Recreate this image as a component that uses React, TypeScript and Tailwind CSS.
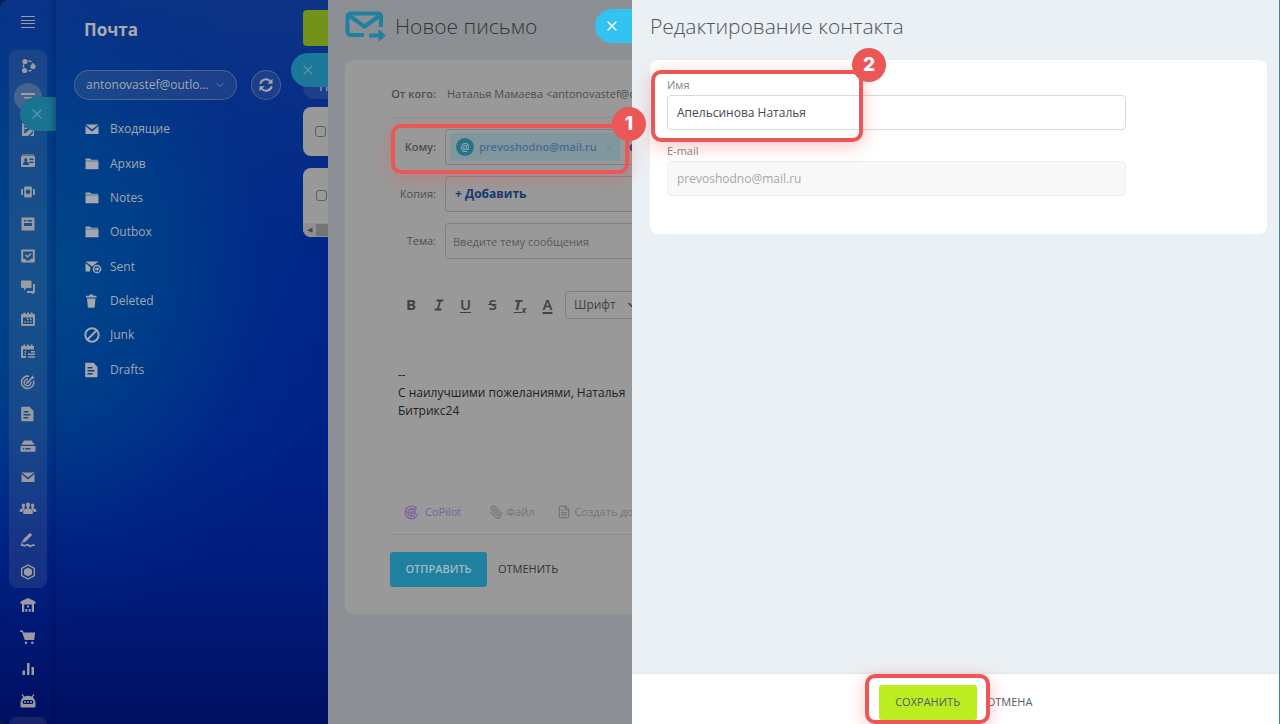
import React from "react";
import { X, ChevronDown, Paperclip, FileText, Ban } from "lucide-react";

type IconProps = { className?: string };

function Glyph({ children, className = "size-4" }: { children: React.ReactNode; className?: string }) {
  return (
    <svg viewBox="0 0 16 16" className={className} fill="currentColor" fillRule="evenodd" aria-hidden="true">
      {children}
    </svg>
  );
}

const stroke = { fill: "none", stroke: "currentColor" };

const Network = () => (
  <Glyph>
    <circle cx="8.5" cy="8" r="5" {...stroke} strokeWidth="1.6" strokeDasharray="3 1.6" />
    <circle cx="5" cy="3.5" r="2.6" />
    <circle cx="13" cy="8.5" r="2.6" />
    <circle cx="4.5" cy="12.5" r="2.6" />
  </Glyph>
);
const Filter = () => (
  <Glyph>
    <path d="M1 4h14v2H1zM4 8h8v1.6H4zM6 12h4v1.6H6z" />
  </Glyph>
);
const DocEdit = () => (
  <Glyph>
    <path d="M2 2h9v3h-1.500L4 11v1h1.500L14 4v11h-4l3-3v-2l-5 5H2zM4 5h4v1.500H4zM4 8h2v1.500H4z" />
  </Glyph>
);
const ContactCard = () => (
  <Glyph>
    <path d="M2 1.500h12v1H2zM2 3h12a1 1 0 0 1 1 1v9a1 1 0 0 1-1 1H2a1 1 0 0 1-1-1V4a1 1 0 0 1 1-1zM5.500 5A1.700 2 0 0 0 5 8.600L3 10v2h6v-2L6.500 8.600A1.700 2 0 0 0 5.500 5zM9.500 5.500V7h4V5.500zM9.500 8.500V10h4V8.500z" />
  </Glyph>
);
const Carousel = () => (
  <Glyph>
    <path d="M5 2.500h6a.8.8 0 0 1 .8.8v9.400a.8.8 0 0 1-.8.8H5a.8.8 0 0 1-.8-.8V3.300a.8.8 0 0 1 .8-.8zM8 5.500a2.300 2.300 0 1 0 0 4.600 2.300 2.300 0 0 0 0-4.600zM1 5h1.800v6H1zM13.200 5H15v6h-1.800z" />
  </Glyph>
);
const Feed = () => (
  <Glyph>
    <path d="M2 1.500h12a.5.5 0 0 1 .5.5v12a.5.5 0 0 1-.5.5H2a.5.5 0 0 1-.5-.5V2a.5.5 0 0 1 .5-.5zM4 4v1.500h2V4zM7.500 4v1.500H12V4zM4 7v3h8V7z" />
  </Glyph>
);
const TaskBox = () => (
  <Glyph>
    <path d="M2 1.500h12a.8.8 0 0 1 .8.8v11.400a.8.8 0 0 1-.8.8H2a.8.8 0 0 1-.8-.8V2.300a.8.8 0 0 1 .8-.8zM3.200 3.500v7.200h2l1.300 1.800h3l1.300-1.800h2V3.500z" />
    <path d="M5.500 7l2 2 3.500-3.500" {...stroke} strokeWidth="1.500" />
  </Glyph>
);
const Chats = () => (
  <Glyph>
    <path d="M2 1.500h8.500a1 1 0 0 1 1 1V8a1 1 0 0 1-1 1H6.500L4 11.500V9H2a1 1 0 0 1-1-1V2.500a1 1 0 0 1 1-1zM13 5h1a1 1 0 0 1 1 1v7a1 1 0 0 1-1 1h-.5v1.500L11 14H7v-2h6z" />
  </Glyph>
);
const Calendar = () => (
  <Glyph>
    <path d="M2 3h1.500V1.500h1.800V3h1.700V1.500h2V3h1.700V1.500h1.800V3H14a1 1 0 0 1 1 1v10a1 1 0 0 1-1 1H2a1 1 0 0 1-1-1V4a1 1 0 0 1 1-1zM3 6.500V13h10V6.500z" />
    <path d="M7 7.500h1.600V9H7zM10 7.500h1.600V9H10zM4.300 10.300h1.600v1.500H4.300zM7 10.300h1.600v1.500H7zM10 10.300h1.600v1.500H10z" />
  </Glyph>
);
const CalendarList = () => (
  <Glyph>
    <path d="M2 3h1.500V1.500h1.800V3h1.700V1.500h2V3h1.700V1.500h1.800V3H14v3.500H3V13h3v2H2a1 1 0 0 1-1-1V4a1 1 0 0 1 1-1zM4.500 8H6v1.500H4.500zM8 10.500h7V12H8zM8 13.200h7v1.600H8zM11 8h4v1.500h-4zM4.500 10.500H6V12H4.500z" />
  </Glyph>
);
const Target = () => (
  <Glyph>
    <path d="M13.600 6.500A6.200 6.200 0 1 1 9 2.300" {...stroke} strokeWidth="1.600" />
    <path d="M10.700 7.600A3.300 3.300 0 1 1 8 5.200" {...stroke} strokeWidth="1.500" />
    <path d="M7 9l5-5" {...stroke} strokeWidth="1.600" />
    <path d="M11 3.500L13 1v2h2l-2.500 2H11z" />
    <circle cx="7.300" cy="8.500" r="1.300" />
  </Glyph>
);
const Doc = () => (
  <Glyph>
    <path d="M2 .8h7.500L13.500 5v9.500a.8.8 0 0 1-.8.800H2a.8.8 0 0 1-.8-.8V1.600A.8.8 0 0 1 2 .8zM3.500 5v1.500h5V5zM3.500 8v1.500h7V8zM3.500 11v1.500h5V11z" />
  </Glyph>
);
const Drive = () => (
  <Glyph>
    <path d="M4 2.500h7.500l3 4.200h-13zM1 8h14a.5.5 0 0 1 .5.5V13a.8.8 0 0 1-.8.800H1.300a.8.8 0 0 1-.8-.8V8.500A.5.5 0 0 1 1 8zM2.800 10v1.600h1.500V10zM5.500 10v1.600h5V10z" />
  </Glyph>
);
const Mail = () => (
  <Glyph>
    <path d="M1.500 3.500h13L8 8.600zM1.500 5l6.500 5.500L14.500 5v7.500a.6.6 0 0 1-.6.600H2.100a.6.6 0 0 1-.6-.6z" />
  </Glyph>
);
const People = () => (
  <Glyph className="size-4 overflow-visible">
    <path d="M8 1.500c1.300 0 2 .9 2 2.300 0 1.200-.4 2-.9 2.600v1.100l3 1.500c.5.300.7.800.7 1.500v2.500H3.200v-2.500c0-.7.200-1.200.7-1.500l3-1.500V6.400C6.400 5.800 6 5 6 3.800c0-1.400.7-2.300 2-2.300zM3.500 2.500c1 0 1.500.7 1.500 1.800 0 1-.3 1.500-.6 2v1l1 .5-2 1.200C2.500 9.500 2.300 10.300 2.300 11H-.3V9.300c0-.5.200-.8.600-1l2.200-1v-1c-.4-.5-.7-1-.7-2 0-1.100.7-1.800 1.700-1.800zM12.500 2.500c-1 0-1.500.7-1.500 1.800 0 1 .3 1.500.6 2v1l-1 .5 2 1.200c.9.500 1.100 1.300 1.100 2h2.600V9.300c0-.5-.2-.8-.6-1l-2.200-1v-1c.4-.5.7-1 .7-2 0-1.100-.7-1.800-1.700-1.800z" />
  </Glyph>
);
const Sign = () => (
  <Glyph>
    <path d="M10 .8L12.200 3 5.500 9.800 2 11l1.200-3.400zM1 10l1.500 1.500L1 12z" />
    <path d="M1 13.500c2-2 2.500 1 4.500 0s2-1.500 3.500 0 2 .5 3 0 1.500 0 2.500-1" {...stroke} strokeWidth="1.800" />
  </Glyph>
);
const Hexagon = () => (
  <Glyph>
    <path d="M8 1l6.300 3.500v7L8 15l-6.300-3.500v-7z" {...stroke} strokeWidth="1.400" />
    <path d="M8 3.500l4 2.200v4.600l-4 2.200-4-2.200V5.700z" />
  </Glyph>
);
const Warehouse = () => (
  <Glyph>
    <path d="M8 1l7.500 3.500v2.300H14V15h-2.200V7.500H4.200V15H2V6.800H.5V4.500zM7 8.500h2v2H7zM5.300 12h2v2.800h-2zM8.700 12h2v2.800h-2z" />
  </Glyph>
);
const Cart = () => (
  <Glyph>
    <path d="M0 1.500h2.800l.8 2h11.600l-1 7.500H4.800L2 3H0zM6 12.500a1.300 1.300 0 1 1 0 2.600 1.300 1.300 0 0 1 0-2.600zM12.300 12.500a1.300 1.300 0 1 1 0 2.600 1.300 1.300 0 0 1 0-2.600z" />
  </Glyph>
);
const Bars = () => (
  <Glyph>
    <path d="M2.500 9.500h2.500V14H2.500zM7 2h2.500v12H7zM11.500 6H14v8h-2.500z" />
  </Glyph>
);
const Robot = () => (
  <Glyph>
    <path d="M2.500 1l2 2.500a8 8 0 0 1 7 0l2-2.500.8.700-1.500 2.500C14.500 5.800 15.500 8 15.500 10v3.500a1 1 0 0 1-1 1h-13a1 1 0 0 1-1-1V10c0-2 1-4.200 2.700-5.800L1.700 1.700zM4.500 7a2 2 0 0 0 0 4h7a2 2 0 0 0 0-4z" />
    <circle cx="5" cy="9" r="1.100" />
    <path d="M7 8.300h2v1.400H7z" />
    <circle cx="11" cy="9" r="1.100" />
  </Glyph>
);
const Folder = () => (
  <Glyph>
    <path d="M1.500 2.500H6l1.500 1.200H14v1H1.500zM1.500 5.300h13v7.900h-13z" />
  </Glyph>
);
const SentMail = () => (
  <Glyph className="size-4 overflow-visible">
    <path d="M1.500 2.500h13L8 7.500zM1.500 4l5 4.200-.5 4.300H1.500z" />
    <circle cx="13" cy="10" r="3.600" {...stroke} strokeWidth="1.500" />
    <path d="M10.700 9.200h2V7.800l2.700 2.200-2.700 2.200v-1.400h-2z" />
  </Glyph>
);
const Trash = () => (
  <Glyph>
    <path d="M5.500 1.500h3.500v1.200h3.500v1.800H2V2.700h3.500zM3 5.500h8.500l-.8 8.300a1 1 0 0 1-1 .9H4.800a1 1 0 0 1-1-.9z" />
  </Glyph>
);
const Junk = () => <Ban className="size-4 -scale-x-100" strokeWidth={3} />;

const Refresh = () => (
  <Glyph>
    <path d="M2.300 6.800A5.800 5.800 0 0 1 12.500 4.500M13.700 9.200A5.800 5.800 0 0 1 3.500 11.500" {...stroke} strokeWidth="2" />
    <path d="M14.500 1.800v5h-5zM1.500 14.200v-5h5z" />
  </Glyph>
);

const mainItems: [string, () => React.ReactElement][] = [
  ["Группы", Network],
  ["Фильтр", Filter],
  ["Документы", DocEdit],
  ["Контакты", ContactCard],
  ["Продажи", Carousel],
  ["Лента", Feed],
  ["Задачи", TaskBox],
  ["Чат", Chats],
  ["Календарь", Calendar],
  ["Расписание", CalendarList],
  ["Цели", Target],
  ["Файлы", Doc],
  ["Диск", Drive],
  ["Почта", Mail],
  ["Сотрудники", People],
  ["Подпись", Sign],
  ["Маркет", Hexagon],
];

const extraItems: [string, () => React.ReactElement][] = [
  ["Склад", Warehouse],
  ["Магазин", Cart],
  ["Аналитика", Bars],
  ["Автоматизация", Robot],
];

const folders: [string, () => React.ReactElement][] = [
  ["Входящие", Mail],
  ["Архив", Folder],
  ["Notes", Folder],
  ["Outbox", Folder],
  ["Sent", SentMail],
  ["Deleted", Trash],
  ["Junk", Junk],
  ["Drafts", Doc],
];

function CloseTab({ className }: IconProps) {
  return (
    <button
      aria-label="Закрыть"
      className={`absolute flex h-[34px] items-center rounded-l-full pl-[9px] ${className}`}
    >
      <X className="size-4" strokeWidth={2} />
    </button>
  );
}

function Badge({ n, className }: { n: number; className: string }) {
  return (
    <span
      className={`absolute flex size-[34px] items-center justify-center rounded-full bg-[#eb5757] font-['Inter',sans-serif] text-[19px] font-extrabold text-white ${className}`}
    >
      {n}
    </span>
  );
}

function Marker({ className, children }: { className: string; children?: React.ReactNode }) {
  return (
    <div
      className={`pointer-events-none absolute rounded-[10px] border-4 border-[#eb5757] shadow-[0_4px_18px_rgba(235,87,87,0.35)] ${className}`}
    >
      {children}
    </div>
  );
}

function Sidebar() {
  return (
    <nav className="relative flex w-14 shrink-0 flex-col items-center overflow-hidden text-[#999ba0]">
      <button aria-label="Меню" className="mt-4 flex h-3 w-[14px] flex-col justify-between">
        <span className="h-px w-full bg-[#9a9ca2]" />
        <span className="h-px w-full bg-[#9a9ca2]" />
        <span className="h-px w-full bg-[#9a9ca2]" />
        <span className="h-px w-full bg-[#9a9ca2]" />
      </button>
      <ul className="mt-[22px] flex h-[538px] w-[38px] shrink-0 flex-col rounded-lg bg-[#999]/15">
        {mainItems.map(([name, Icon]) => (
          <li key={name} className="flex flex-1 items-center justify-center">
            <button
              aria-label={name}
              className={
                name === "Фильтр"
                  ? "-my-2 flex size-7 shrink-0 items-center justify-center rounded-full bg-[#999]/35"
                  : "flex"
              }
            >
              <Icon />
            </button>
          </li>
        ))}
      </ul>
      <ul className="mt-px w-[38px] shrink-0">
        {extraItems.map(([name, Icon]) => (
          <li key={name} className="flex h-8 items-center justify-center">
            <button aria-label={name} className="flex">
              <Icon />
            </button>
          </li>
        ))}
      </ul>
      <div className="w-[38px] flex-1 rounded-t-lg bg-[#999]/15" />
      <CloseTab className="top-[97px] right-0 w-9 bg-[#197491] text-[#5793a8]" />
    </nav>
  );
}

function MailPanel() {
  return (
    <section className="relative flex w-[272px] shrink-0 overflow-hidden text-[#a4a7ad] shadow-[-2px_0_6px_rgba(0,10,60,0.35)]">
      <div className="w-[247px] shrink-0 pl-[18px]">
        <h2 className="mt-4 pl-[10px] text-[17px] leading-7 font-bold text-[#a9abb0]">Почта</h2>
        <div className="mt-[26px] flex gap-[14px]">
          <button className="flex h-[30px] w-[163px] items-center justify-between rounded-full border border-[#999]/40 bg-[#999]/15 pr-[10px] pl-[11px] text-[12px]">
            antonovastef@outlo...
            <ChevronDown className="size-3 shrink-0 opacity-60" />
          </button>
          <button
            aria-label="Обновить"
            className="flex size-[30px] items-center justify-center rounded-full border border-[#999]/40 bg-[#999]/15"
          >
            <Refresh />
          </button>
        </div>
        <ul className="mt-3 flex h-[275px] flex-col">
          {folders.map(([name, Icon]) => (
            <li key={name} className="flex flex-1 items-center">
              <a href="#" className="flex items-center gap-[10px] pl-[10px] text-[12px]">
                <Icon />
                {name}
              </a>
            </li>
          ))}
        </ul>
      </div>
      <div className="flex flex-1 flex-col pt-[10px]">
        <button aria-label="Написать" className="h-9 rounded-l bg-[#72921a]" />
        <div className="mt-[34px] h-[19px] overflow-hidden rounded-bl-xl bg-[#999]/15 pl-4 text-[13px] leading-3">П</div>
        <div className="mt-2 flex h-[49px] items-center rounded-l-lg bg-[#999] pl-3">
          <input
            type="checkbox"
            aria-label="Выбрать все"
            className="size-[11px] appearance-none rounded-[3px] border border-[#5c5f63]"
          />
        </div>
        <div className="mt-3 flex h-[69px] flex-col overflow-hidden rounded-l-lg bg-[#999]">
          <div className="flex flex-1 items-center pl-[13px]">
            <input
              type="checkbox"
              aria-label="Выбрать письмо"
              className="size-[11px] shrink-0 appearance-none rounded-[3px] border border-[#5c5f63]"
            />
          </div>
          <div className="flex h-[14px] items-center bg-[#8f8f8f] pl-1">
            <span className="text-[7px] text-[#4a4a4a]">◀</span>
            <span className="ml-1 h-3 flex-1 bg-[#747474]" />
          </div>
        </div>
      </div>
      <CloseTab className="top-[53px] right-0 w-[37px] bg-[#1b7898] text-[#5793a8]" />
    </section>
  );
}

function ComposeIcon() {
  return (
    <svg viewBox="0 0 42 32" className="h-8 w-[42px]" fill="none" stroke="#20809f" strokeWidth="4" aria-hidden="true">
      <path d="M19 24H6a3.500 3.500 0 0 1-3.500-3.500V6A3.500 3.500 0 0 1 6 2.500h27A3.500 3.500 0 0 1 36 6v10" />
      <path d="M4 4.500l15.500 11L35 4.500" />
      <path d="M24 24.500h11" strokeWidth="4" />
      <path d="M33.500 18v13l7.500-6.500z" fill="#20809f" stroke="none" />
    </svg>
  );
}

const labelClass = "w-[45px] shrink-0 text-right text-[11px] whitespace-nowrap";
const boxClass = "flex h-9 flex-1 items-center rounded-l border border-r-0 border-[#7d8084]";

function ComposePanel() {
  return (
    <section className="relative z-10 flex w-[304px] shrink-0 flex-col bg-[#8c9094] text-[#4a4e54]">
      <div className="flex flex-1 flex-col overflow-hidden">
        <header className="flex h-[60px] items-center gap-2 pb-[6px] pl-[17px]">
          <ComposeIcon />
          <h2 className="text-[21px] font-light whitespace-nowrap text-[#333437]">Новое письмо</h2>
        </header>
        <form
          className="ml-[17px] flex h-[554px] flex-col rounded-l-lg bg-[#999] pl-[46px]"
          onSubmit={(e) => e.preventDefault()}
        >
          <div className="mt-3 flex h-[46px] items-center gap-[11px] border-b border-[#8b8d90] text-[11px] whitespace-nowrap">
            <span className={`${labelClass} font-semibold`}>От кого:</span>
            <span>Наталья Мамаева &lt;antonovastef@outlook.com&gt;</span>
          </div>
          <div className="mt-[11px] flex items-center gap-[9px]">
            <span className={`${labelClass} font-semibold`}>Кому:</span>
            <div className={`${boxClass} gap-[9px] pl-1`}>
              <span className="flex h-7 w-[170px] shrink-0 items-center rounded-sm bg-[#80979d] pl-[6px] text-[11px] font-semibold text-[#4b6a94]">
                <span className="flex size-[18px] items-center justify-center rounded-full bg-[#2a7287] text-[10px] text-[#93afb7]">
                  @
                </span>
                <span className="ml-[5px] flex-1">prevoshodno@mail.ru</span>
                <X className="mr-[6px] size-[10px] text-[#718c95]" />
              </span>
              <a href="#" className="text-[12px] font-bold text-[#143a70]">еще</a>
            </div>
          </div>
          <div className="mt-[11px] flex items-center gap-[9px]">
            <span className={labelClass}>Копия:</span>
            <div className={`${boxClass} pl-[9px]`}>
              <button className="text-[12px] font-bold text-[#143a70]">+ Добавить</button>
            </div>
          </div>
          <div className="mt-[11px] flex items-center gap-[9px]">
            <label htmlFor="subject" className={labelClass}>
              Тема:
            </label>
            <input
              id="subject"
              placeholder="Введите тему сообщения"
              className={`${boxClass} min-w-0 pl-[7px] text-[11px] placeholder:text-[#56595e]`}
            />
          </div>
          <div className="mt-[25px] flex h-[42px] items-center border-b border-[#949698] text-[15px] font-bold whitespace-nowrap text-[#3f4349]">
            <button aria-label="Полужирный" className="ml-[7px] w-[27px] shrink-0 pl-2 text-left">B</button>
            <button aria-label="Курсив" className="flex w-[27px] shrink-0 justify-center">
              <svg viewBox="0 0 10 12" className="h-3 w-[10px]" fill="none" stroke="currentColor" strokeWidth="1.800" aria-hidden="true">
                <path d="M2.500 1.500h7M.5 10.500h7M6.200 1.500l-2.400 9" />
              </svg>
            </button>
            <button aria-label="Подчёркнутый" className="w-[27px] shrink-0 font-semibold underline underline-offset-2">U</button>
            <button aria-label="Зачёркнутый" className="w-[27px] shrink-0 font-semibold line-through">S</button>
            <button aria-label="Очистить формат" className="w-[28px] shrink-0 italic underline underline-offset-2">
              T<sub className="text-[9px]">x</sub>
            </button>
            <button aria-label="Цвет текста" className="w-[27px] shrink-0 font-semibold underline decoration-2 underline-offset-2">A</button>
            <button className="ml-1 flex h-7 w-24 shrink-0 items-center gap-[10px] rounded border border-[#7d8084] pl-2 text-[12px] font-normal">
              Шрифт
              <ChevronDown className="size-3" strokeWidth={3} />
            </button>
          </div>
          <div className="mt-10 h-[124px] pl-[7px] text-[12px] leading-[18px] whitespace-nowrap text-[#1f2023]">
            <p>--</p>
            <p>С наилучшими пожеланиями, Наталья</p>
            <p>Битрикс24</p>
          </div>
          <div className="flex h-[45px] items-center border-b border-[#8b8d90] pl-[13px] text-[11px] whitespace-nowrap text-[#72757a]">
            <button className="flex items-center gap-[6px] text-[#7d5fa3]">
              <svg viewBox="0 0 16 16" className="size-[15px]" fill="none" stroke="currentColor" strokeWidth="1.500" aria-hidden="true">
                <path d="M13.500 4A6.700 6.700 0 1 0 14.700 9" />
                <circle cx="8" cy="8" r="3.800" strokeWidth="1.800" />
                <path d="M8 6v4M6 8h4M11 5l2.500-1.500" />
              </svg>
              CoPilot
            </button>
            <button className="ml-7 flex items-center gap-[3px]">
              <Paperclip className="size-[14px] -scale-x-100" /> Файл
            </button>
            <button className="ml-[23px] flex items-center gap-[3px]">
              <FileText className="size-[14px] shrink-0" /> Создать документ
            </button>
          </div>
          <div className="mt-[17px] flex items-center text-[11px]">
            <button className="-ml-px h-[35px] w-[97px] rounded-[3px] bg-[#20809f] font-semibold text-[#a3bbc4]">ОТПРАВИТЬ</button>
            <button className="ml-[11px] font-medium text-[#303439]">ОТМЕНИТЬ</button>
          </div>
        </form>
      </div>
      <CloseTab className="top-[9px] right-0 w-[37px] bg-[#33c3f1] text-white" />
      <Marker className="top-[124px] left-[63px] h-[50px] w-[238px]">
        <Badge n={1} className="-top-[21px] -right-[21px]" />
      </Marker>
    </section>
  );
}

function EditPanel() {
  return (
    <section className="flex min-w-0 flex-1 flex-col border-r border-[#3e7fd0] bg-[#ebf0f4] text-[#535c69]">
      <header className="flex h-[60px] items-center pb-[6px] pl-[18px]">
        <h1 className="text-[21px] font-light whitespace-nowrap text-[#50545b]">Редактирование контакта</h1>
      </header>
      <form className="relative mr-3 ml-[18px] h-[174px] rounded-lg bg-white pt-[17px] pr-4 pl-[17px]">
        <label htmlFor="name" className="mb-[2px] block text-[11px] leading-4 text-[#80868e]">
          Имя
        </label>
        <input
          id="name"
          defaultValue="Апельсинова Наталья"
          className="block h-[35px] w-full max-w-[459px] rounded border border-[#d5dade] px-[9px] text-[12px] text-[#444a53]"
        />
        <label htmlFor="email" className="mt-[13px] mb-[2px] block text-[11px] leading-4 text-[#80868e]">
          E-mail
        </label>
        <input
          id="email"
          disabled
          defaultValue="prevoshodno@mail.ru"
          className="block h-[35px] w-full max-w-[459px] rounded border border-[#eceeef] bg-[#f8f8f8] px-[9px] text-[12px] text-[#a3a8ad]"
        />
        <Marker className="top-[10px] left-px h-[72px] w-[212px]">
          <Badge n={2} className="-top-[26px] -right-[27px]" />
        </Marker>
      </form>
      <footer className="mt-auto flex h-[50px] items-center justify-center gap-[10px] bg-white pt-[7px] text-[11px] font-medium shadow-[0_-1px_3px_rgba(0,0,0,0.06)]">
        <div className="relative">
          <button className="h-[35px] w-[98px] rounded-[3px] bg-[#bbed21]">СОХРАНИТЬ</button>
          <Marker className="-top-[11px] -left-[14px] h-[50px] w-[125px]" />
        </div>
        <button>ОТМЕНА</button>
      </footer>
    </section>
  );
}

export default function App() {
  return (
    <div className="min-h-screen bg-[#071a4d]">
      <main className="flex min-h-screen overflow-hidden rounded-l-lg bg-[radial-gradient(300px_360px_at_40px_270px,#004689_0,rgba(0,66,137,0.8)_40%,rgba(0,50,137,0.3)_75%,rgba(0,36,138,0)_100%),linear-gradient(to_bottom,#0d3486_0,#002688_35%,#002288_60%,#001b7c_80%,#001062_100%)] font-['Open_Sans','Noto_Sans',sans-serif]">
        <Sidebar />
        <MailPanel />
        <ComposePanel />
        <EditPanel />
      </main>
    </div>
  );
}
